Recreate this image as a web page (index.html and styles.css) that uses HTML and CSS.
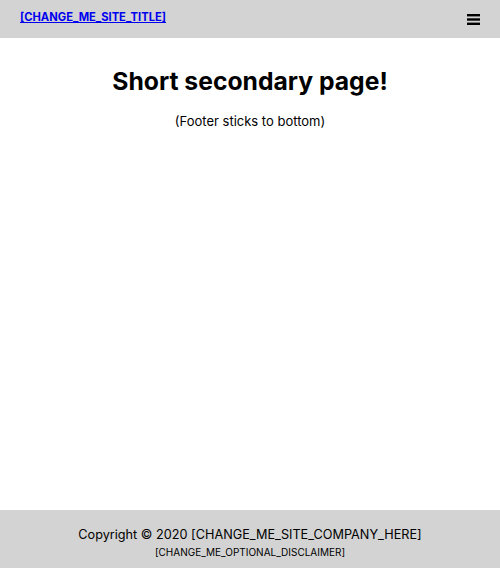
FILE: index.html
```html
<!DOCTYPE html>
<html lang="en">
<head>
<meta charset="utf-8">
<title>Short secondary page</title>
<link rel="stylesheet" href="styles.css">
</head>
<body>
<header class="site-header">
  <a class="site-title" href="#">[CHANGE_ME_SITE_TITLE]</a>
  <button class="menu-btn" aria-label="Menu">
    <svg width="13" height="11" viewBox="0 0 13 11"><rect x="0" y="0" width="13" height="2.4" fill="#000"/><rect x="0" y="4.3" width="13" height="2.4" fill="#000"/><rect x="0" y="8.6" width="13" height="2.4" fill="#000"/></svg>
  </button>
</header>
<main class="content">
  <h1 class="page-title">Short secondary page!</h1>
  <p class="page-note">(Footer sticks to bottom)</p>
</main>
<footer class="site-footer">
  <p class="copyright">Copyright © 2020 [CHANGE_ME_SITE_COMPANY_HERE]</p>
  <p class="disclaimer">[CHANGE_ME_OPTIONAL_DISCLAIMER]</p>
</footer>
</body>
</html>
```
FILE: styles.css
```css
html, body { margin: 0; padding: 0; }
body {
  font-family: Inter, "Noto Sans", sans-serif;
  color: #000;
  min-height: 100vh;
  display: flex;
  flex-direction: column;
}
.site-header {
  height: 38px;
  background: #d3d3d3;
  display: flex;
  align-items: center;
  justify-content: space-between;
  padding: 0 20px;
}
.site-title {
  font-size: 11.2px;
  font-weight: 700;
  color: #0000ee;
  text-decoration: underline;
  margin-top: -4px;
}
.menu-btn {
  background: none;
  border: 0;
  padding: 0;
  display: flex;
}
.content {
  flex: 1;
  text-align: center;
  padding-top: 27px;
}
.page-title {
  margin: 0;
  font-size: 24.7px;
  font-weight: 700;
  line-height: 32px;
}
.page-note {
  margin: 16px 0 0;
  font-size: 13px;
  line-height: 16px;
}
.site-footer {
  background: #d3d3d3;
  height: 58px;
  text-align: center;
  padding-top: 16px;
  box-sizing: border-box;
}
.copyright {
  margin: 0;
  font-size: 12.7px;
  line-height: 18px;
  font-weight: 400;
}
.disclaimer {
  margin: 1px 0 0;
  font-size: 10px;
  line-height: 14px;
}
```
